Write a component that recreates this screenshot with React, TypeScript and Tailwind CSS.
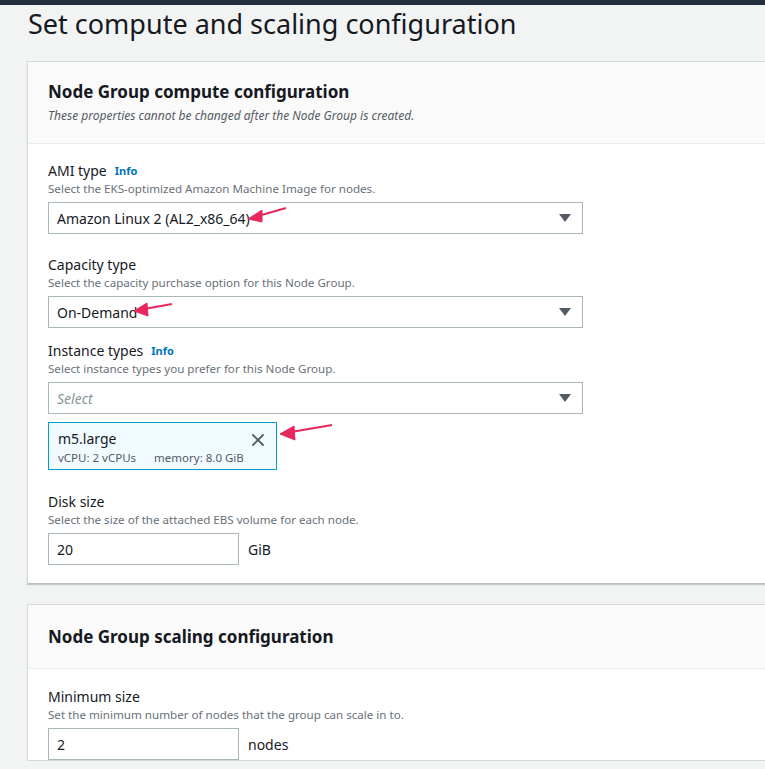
import { X } from "lucide-react"

function Info() {
  return <span className="ml-2 text-[11px] font-bold text-[#0073bb]">Info</span>
}

function Caret() {
  return (
    <svg width="12" height="8" viewBox="0 0 12 8" className="ml-auto">
      <path d="M0 0 H12 L6 8 Z" fill="#545b64" />
    </svg>
  )
}

function Field({
  label,
  info,
  desc,
  children,
}: {
  label: string
  info?: boolean
  desc: string
  children: React.ReactNode
}) {
  return (
    <div>
      <div className="flex items-center text-[14px] leading-[20px] text-[#16191f]">
        {label}
        {info && <Info />}
      </div>
      <div className="mb-[5px] text-[11.6px] leading-[16px] text-[#687078]">{desc}</div>
      {children}
    </div>
  )
}

function SelectBox({ value, placeholder }: { value?: string; placeholder?: string }) {
  return (
    <div className="flex h-[32px] w-[535px] items-center border border-[#aab7b8] bg-white pl-[8px] pr-[11px] text-[14px]">
      {value ? (
        <span className="text-[#16191f]">{value}</span>
      ) : (
        <span className="italic text-[#879596]">{placeholder}</span>
      )}
      <Caret />
    </div>
  )
}

function NumberInput({ value, unit }: { value: string; unit: string }) {
  return (
    <div className="flex items-center">
      <div className="flex h-[32px] w-[191px] items-center border border-[#aab7b8] bg-white pl-[8px] text-[14px] text-[#16191f]">
        {value}
      </div>
      <span className="ml-[9px] text-[14px] text-[#16191f]">{unit}</span>
    </div>
  )
}

export default function App() {
  return (
    <div
      className="relative h-[769px] w-[765px] overflow-hidden bg-[#f2f3f3]"
      style={{ fontFamily: '"Noto Sans", "Open Sans", sans-serif' }}
    >
      <div className="h-[5px] bg-[#232f3e]" />
      <h1 className="ml-[28px] mt-[1px] text-[27px] font-normal leading-[36px] text-[#16191f]">
        Set compute and scaling configuration
      </h1>

      <div className="ml-[27px] mt-[19px] w-[760px] border border-[#d5dbdb] border-b-[#b6bec0] bg-white shadow-[0_1px_1px_rgba(0,28,36,0.2)]">
        <div className="border-b border-[#eaeded] bg-[#fafafa] px-[20px] pt-[18px] pb-[17px]">
          <h2 className="text-[17px] font-bold leading-[24px] text-[#16191f]">
            Node Group compute configuration
          </h2>
          <p className="mt-[2px] text-[12px] italic leading-[20px] text-[#545b64]">
            These properties cannot be changed after the Node Group is created.
          </p>
        </div>
        <div className="flex flex-col px-[20px] pt-[17px] pb-[18px]">
          <Field label="AMI type" info desc="Select the EKS-optimized Amazon Machine Image for nodes.">
            <SelectBox value="Amazon Linux 2 (AL2_x86_64)" />
          </Field>
          <div className="mt-[21px]">
            <Field label="Capacity type" desc="Select the capacity purchase option for this Node Group.">
              <SelectBox value="On-Demand" />
            </Field>
          </div>
          <div className="mt-[13px]">
            <Field label="Instance types" info desc="Select instance types you prefer for this Node Group.">
              <SelectBox placeholder="Select" />
              <div className="mt-[8px] flex w-[229px] items-start border border-[#00a1c9] bg-[#f1faff] px-[9px] pt-[6px] pb-[2px]">
                <div>
                  <div className="text-[14px] leading-[20px] text-[#16191f]">m5.large</div>
                  <div className="flex gap-[18px] text-[11.5px] leading-[18px] text-[#545b64]">
                    <span>vCPU: 2 vCPUs</span>
                    <span>memory: 8.0 GiB</span>
                  </div>
                </div>
                <X className="ml-auto mt-[1px] -mr-[1px]" size={20} strokeWidth={2.2} color="#545b64" />
              </div>
            </Field>
          </div>
          <div className="mt-[22px]">
            <Field label="Disk size" desc="Select the size of the attached EBS volume for each node.">
              <NumberInput value="20" unit="GiB" />
            </Field>
          </div>
        </div>
      </div>

      <div className="ml-[27px] mt-[20px] w-[760px] border border-[#d5dbdb] bg-white">
        <div className="border-b border-[#eaeded] bg-[#fafafa] px-[20px] pt-[20px] pb-[19px]">
          <h2 className="text-[17px] font-bold leading-[24px] text-[#16191f]">
            Node Group scaling configuration
          </h2>
        </div>
        <div className="px-[20px] pt-[18px]">
          <Field
            label="Minimum size"
            desc="Set the minimum number of nodes that the group can scale in to."
          >
            <NumberInput value="2" unit="nodes" />
          </Field>
        </div>
      </div>

      <svg className="pointer-events-none absolute left-0 top-0" width="765" height="769">
        <g stroke="#e8275c" strokeWidth="2" fill="#e8275c">
          <line x1="286" y1="208" x2="258" y2="216" />
          <path d="M248 219 L262 210 L262 222 Z" strokeWidth="1" />
          <line x1="172" y1="304" x2="144" y2="309" />
          <path d="M134 311 L147 303 L148 316 Z" strokeWidth="1" />
          <line x1="332" y1="425" x2="291" y2="432" />
          <path d="M280 434 L294 426 L295 440 Z" strokeWidth="1" />
        </g>
      </svg>
    </div>
  )
}
